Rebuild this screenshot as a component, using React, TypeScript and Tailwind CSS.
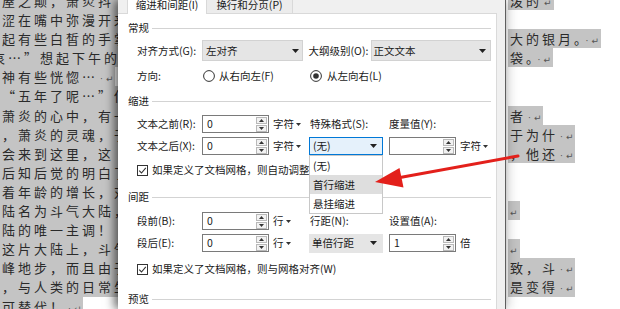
import React from "react";

function Mark({ dot = true }: { dot?: boolean }) {
  return (
    <span className="font-['DejaVu_Sans',sans-serif] text-[9px] tracking-normal text-[#555] pl-[2px] pr-[2px]">
      {dot ? "·" : ""}
      <span className={dot ? "pl-[3px]" : "pl-0"}>↵</span>
    </span>
  );
}

function Tri() {
  return (
    <svg width="7" height="4" viewBox="0 0 7 4">
      <path d="M0 0H7L3.5 4Z" fill="#222" />
    </svg>
  );
}

function Caret() {
  return (
    <svg width="5" height="3" viewBox="0 0 5 3" className="ml-[2px]">
      <path d="M0 0H5L2.5 3Z" fill="#333" />
    </svg>
  );
}

function Spin({ value }: { value: string }) {
  return (
    <div className="w-[67px] h-[18px] border border-[#7a7a7a] bg-white flex items-center">
      <span className="flex-1 pl-[4px] leading-none">{value}</span>
      <div className="flex flex-col gap-[1px] mr-[1px]">
        <div className="w-[11px] h-[7px] border border-[#b9b9b9] bg-[#f2f2f2] flex items-center justify-center">
          <svg width="5" height="3" viewBox="0 0 5 3">
            <path d="M0 3L2.5 0L5 3Z" fill="#333" />
          </svg>
        </div>
        <div className="w-[11px] h-[7px] border border-[#b9b9b9] bg-[#f2f2f2] flex items-center justify-center">
          <svg width="5" height="3" viewBox="0 0 5 3">
            <path d="M0 0H5L2.5 3Z" fill="#333" />
          </svg>
        </div>
      </div>
    </div>
  );
}

function Check() {
  return (
    <svg width="11" height="11" viewBox="0 0 11 11">
      <rect x="0.5" y="0.5" width="10" height="10" fill="#fff" stroke="#333" />
      <path d="M2.2 5.6L4.5 8L8.8 2.8" fill="none" stroke="#333" strokeWidth="1.1" />
    </svg>
  );
}

function Radio({ on }: { on?: boolean }) {
  return (
    <svg width="12" height="12" viewBox="0 0 12 12">
      <circle cx="6" cy="6" r="5.4" fill="#fff" stroke="#333" />
      {on ? <circle cx="6" cy="6" r="2.8" fill="#333" /> : null}
    </svg>
  );
}

function Section({ title, className }: { title: string; className: string }) {
  return (
    <div className={"flex items-center h-[16px] pl-[10px] " + className}>
      <span className="leading-none">{title}</span>
      <div className="flex-1 h-px bg-[#d3d3d3] ml-[3px]" />
    </div>
  );
}

const leftLines: { t: string; part?: boolean; ml?: boolean }[] = [
  { t: "屋之颠，萧炎抖" },
  { t: "涩在嘴中弥漫开来" },
  { t: "起有些白皙的手掌" },
  { t: "哀…”想起下午的测", ml: true },
  { t: "神有些恍惚…", part: true },
  { t: "“五年了呢…”低低" },
  { t: "萧炎的心中，有一" },
  { t: "，萧炎的灵魂，于" },
  { t: "会来到这里，这" },
  { t: "后知后觉的明白了" },
  { t: "着年龄的增长，对" },
  { t: "陆名为斗气大陆，" },
  { t: "陆的唯一主调！·" },
  { t: "这片大陆上，斗气" },
  { t: "峰地步，而且由于" },
  { t: "，与人类的日常生" },
  { t: "可替代！", part: true },
];

const rightLines: (string | null)[] = [
  "泼的",
  null,
  "大的银月。",
  "袋。",
  null,
  null,
  "者",
  "于为什",
  "，他还",
  null,
  null,
  "",
  null,
  "",
  "致，斗",
  "是变得",
];

export default function App() {
  return (
    <div className="relative w-[620px] h-[309px] overflow-hidden flex bg-white font-['Noto_Sans_CJK_SC',sans-serif] text-[#1a1a1a]">
      {/* left document */}
      <div className="w-[118px] shrink-0 overflow-hidden bg-white">
        <div className="mt-[-9px] text-[13px] tracking-[3px] text-[#2a2a2a]">
          {leftLines.map((l, i) =>
            l.part ? (
              <div key={i} className="h-[19.1px] leading-[19.1px] whitespace-nowrap">
                <span className="inline-block h-[19.1px] bg-[#c4c4c4] pl-[2px]">
                  {l.t}
                  <Mark />
                </span>
              </div>
            ) : (
              <div
                key={i}
                className={
                  "h-[19.1px] leading-[19.1px] whitespace-nowrap bg-[#c4c4c4] " +
                  (l.ml ? "pl-0 ml-[-8px]" : "pl-[2px]")
                }
              >
                {l.t}
              </div>
            )
          )}
        </div>
      </div>

      {/* dialog */}
      <div className="relative z-10 w-[388px] shrink-0 flex flex-col bg-[#f0f0f0] border-r border-[#5e5e5e] shadow-[-4px_0_9px_rgba(0,0,0,0.55),4px_0_10px_rgba(0,0,0,0.12)] text-[10.5px]">
        <div className="h-[14px] shrink-0 flex pl-[9px] border-b border-[#d9d9d9] mr-[8px]">
          <div className="w-[80px] h-[14px] bg-white border-x border-[#d9d9d9] flex justify-center items-start leading-[10px]">
            缩进和间距(I)
          </div>
          <div className="w-[86px] h-[13px] bg-[#ececec] border-r border-[#d9d9d9] flex justify-center items-start leading-[10px]">
            换行和分页(P)
          </div>
        </div>
        <div className="flex-1 bg-white mr-[8px] pr-[5px] flex flex-col border-r border-[#dadada]">
          <Section title="常规" className="mt-[6px]" />

          <div className="flex items-center h-[21px] pl-[19px] mt-[4px]">
            <span className="w-[65px] shrink-0">对齐方式(G):</span>
            <div className="w-[101px] h-[21px] bg-[#e5e5e5] border border-[#d2d2d2] flex items-center justify-between pl-[3px] pr-[3px]">
              <span>左对齐</span>
              <Tri />
            </div>
            <span className="ml-[6px] w-[62px] shrink-0">大纲级别(O):</span>
            <div className="w-[121px] h-[21px] bg-[#e5e5e5] border border-[#d2d2d2] flex items-center justify-between pl-[2px] pr-[4px]">
              <span>正文文本</span>
              <Tri />
            </div>
          </div>

          <div className="flex items-center h-[16px] pl-[19px] mt-[7px]">
            <span className="w-[65px] shrink-0">方向:</span>
            <div className="w-[107px] flex items-center">
              <span className="ml-[1px] flex">
                <Radio />
              </span>
              <span className="ml-[4px]">从右向左(F)</span>
            </div>
            <div className="flex items-center">
              <span className="ml-[1px] flex">
                <Radio on />
              </span>
              <span className="ml-[5px]">从左向右(L)</span>
            </div>
          </div>

          <Section title="缩进" className="mt-[9px]" />

          <div className="flex items-center h-[18px] pl-[19px] mt-[6px]">
            <span className="w-[65px] shrink-0">文本之前(R):</span>
            <Spin value="0" />
            <span className="ml-[4px] w-[36px] flex items-center">
              字符
              <Caret />
            </span>
            <span className="w-[74px] pl-[1px]">特殊格式(S):</span>
            <span className="ml-[6px]">度量值(Y):</span>
          </div>

          <div className="flex items-center h-[18px] pl-[19px] mt-[4px]">
            <span className="w-[65px] shrink-0">文本之后(X):</span>
            <Spin value="0" />
            <span className="ml-[4px] w-[36px] flex items-center">
              字符
              <Caret />
            </span>
            <div className="relative w-[74px] h-[18px] bg-[#e5f1fb] border border-[#0078d7] flex items-center justify-between pl-[3px] pr-[5px]">
              <span>(无)</span>
              <Tri />
              <div className="absolute z-10 left-[-1px] top-[17px] w-[74px] bg-white border border-[#c8c8c8] flex flex-col">
                <div className="h-[19px] flex items-center pl-[3px]">(无)</div>
                <div className="h-[19px] flex items-center pl-[3px] bg-[#dedede]">首行缩进</div>
                <div className="h-[19px] flex items-center pl-[3px]">悬挂缩进</div>
              </div>
            </div>
            <div className="ml-[6px]">
              <Spin value="" />
            </div>
            <span className="ml-[4px] flex items-center">
              字符
              <Caret />
            </span>
          </div>

          <div className="flex items-center h-[16px] pl-[19px] mt-[7px] whitespace-nowrap">
            <span className="flex">
              <Check />
            </span>
            <span className="ml-[4px]">如果定义了文档网格，则自动调整右缩进(D)</span>
          </div>

          <Section title="间距" className="mt-[11px]" />

          <div className="flex items-center h-[18px] pl-[19px] mt-[7px]">
            <span className="w-[65px] shrink-0">段前(B):</span>
            <Spin value="0" />
            <span className="ml-[4px] w-[36px] flex items-center">
              行
              <Caret />
            </span>
            <span className="w-[74px] pl-[1px]">行距(N):</span>
            <span className="ml-[6px]">设置值(A):</span>
          </div>

          <div className="flex items-center h-[18px] pl-[19px] mt-[4px]">
            <span className="w-[65px] shrink-0">段后(E):</span>
            <Spin value="0" />
            <span className="ml-[4px] w-[36px] flex items-center">
              行
              <Caret />
            </span>
            <div className="w-[74px] h-[19px] bg-[#e5e5e5] flex items-center justify-between pl-[3px] pr-[6px]">
              <span>单倍行距</span>
              <Tri />
            </div>
            <div className="ml-[6px]">
              <Spin value="1" />
            </div>
            <span className="ml-[4px]">倍</span>
          </div>

          <div className="flex items-center h-[16px] pl-[19px] mt-[9px] whitespace-nowrap">
            <span className="flex">
              <Check />
            </span>
            <span className="ml-[4px]">如果定义了文档网格，则与网格对齐(W)</span>
          </div>

          <Section title="预览" className="mt-[14px]" />
        </div>
      </div>

      {/* right document */}
      <div className="flex-1 overflow-hidden bg-white pl-[2px]">
        <div className="mt-[-9px] text-[13px] tracking-[3px] text-[#2a2a2a]">
          {rightLines.map((l, i) =>
            l === null ? (
              <div key={i} className="h-[19.1px]" />
            ) : (
              <div key={i} className="h-[19.1px] leading-[19.1px] whitespace-nowrap">
                <span
                  className={
                    "inline-block h-[19.1px] bg-[#c4c4c4] " + (l === "" ? "pl-0" : "pl-[2px]")
                  }
                >
                  {l}
                  <Mark dot={l !== "" && l !== "泼的"} />
                </span>
              </div>
            )
          )}
        </div>
      </div>

      {/* red arrow annotation */}
      <svg
        className="absolute inset-0 z-20 pointer-events-none"
        width="620"
        height="309"
        viewBox="0 0 620 309"
      >
        <path d="M518 156L400 177.5" stroke="#e3201b" strokeWidth="3" strokeLinecap="round" fill="none" />
        <path d="M375 182L399.5 168L403.5 187.5Z" fill="#e3201b" />
      </svg>
    </div>
  );
}
